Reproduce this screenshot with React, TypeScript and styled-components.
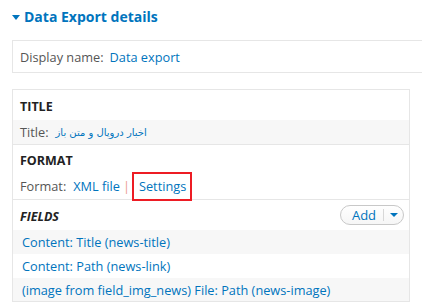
import React from "react";
import styled, { createGlobalStyle } from "styled-components";

const Global = createGlobalStyle`
  html, body { margin: 0; padding: 0; background: #fff; overflow: hidden; }
  body { font-family: "Open Sans", "DejaVu Sans", sans-serif; color: #333; }
`;

const Page = styled.div`
  width: 422px;
  height: 306px;
  padding: 0 0 0 12px;
  box-sizing: border-box;
  overflow: hidden;
`;

const Heading = styled.h2`
  margin: 0;
  padding-top: 6px;
  height: 40px;
  box-sizing: border-box;
  display: flex;
  align-items: flex-start;
  gap: 4px;
  font-size: 14px;
  font-weight: 700;
  color: #0074bd;
  line-height: 22px;
`;

const Caret = styled.span`
  display: inline-block;
  width: 0;
  height: 0;
  margin-top: 9px;
  border-left: 4px solid transparent;
  border-right: 4px solid transparent;
  border-top: 5px solid #0074bd;
`;

const NameBox = styled.div`
  margin-right: -20px;
  height: 33px;
  box-sizing: border-box;
  border: 1px solid #e6e6e6;
  display: flex;
  align-items: center;
  gap: 6px;
  padding: 0 7px;
  font-size: 12.75px;
`;

const Panel = styled.div`
  margin-top: 16px;
  width: 398px;
  box-sizing: border-box;
  border: 1px solid #e6e6e6;
  border-bottom: none;
`;

const SectionHead = styled.div<{ $italic?: boolean; $h: number }>`
  height: ${(p) => p.$h}px;
  box-sizing: border-box;
  display: flex;
  align-items: center;
  justify-content: space-between;
  padding: 2px 5px 0 7px;
  font-size: 12.5px;
  font-weight: 700;
  text-transform: uppercase;
  font-style: ${(p) => (p.$italic ? "italic" : "normal")};
  color: #222;
`;

const Row = styled.div<{ $alt?: boolean; $border?: boolean; $h?: number; $indent?: number }>`
  height: ${(p) => p.$h ?? 24}px;
  box-sizing: border-box;
  display: flex;
  align-items: center;
  gap: 7px;
  padding: 0 7px 0 ${(p) => p.$indent ?? 7}px;
  font-size: 12.75px;
  background: ${(p) => (p.$alt ? "#f7f7f7" : "#fff")};
  border-bottom: ${(p) => (p.$border ? "1px solid #e6e6e6" : "none")};
`;

const Label = styled.span`
  color: #555;
`;

const Link = styled.a`
  color: #0074bd;
  text-decoration: none;
`;

const Arabic = styled.a`
  color: #0074bd;
  text-decoration: none;
  font-family: "DejaVu Sans", sans-serif;
  font-size: 10px;
`;

const Sep = styled.span`
  color: #ec9a92;
  margin-left: -4px;
`;

const Highlight = styled.span`
  border: 2px solid #ed1c24;
  padding: 3px 4px 4px 5px;
  margin-left: -5px;
`;

const AddButton = styled.div`
  display: flex;
  align-items: center;
  height: 20px;
  width: 64px;
  margin-top: -3px;
  box-sizing: border-box;
  border: 1px solid #c8c8c8;
  border-radius: 10px;
  background: linear-gradient(#fff, #f6f6f6);
  font-size: 13px;
  font-weight: 400;
  font-style: normal;
  text-transform: none;
  color: #0074bd;
`;

const AddLabel = styled.span`
  flex: 1;
  text-align: center;
  padding-left: 4px;
`;

const AddToggle = styled.span`
  width: 19px;
  height: 12px;
  border-left: 1px solid #d8d8d8;
  display: flex;
  align-items: center;
  justify-content: center;
  &::after {
    content: "";
    border-left: 4px solid transparent;
    border-right: 4px solid transparent;
    border-top: 4px solid #0074bd;
  }
`;

export default function App() {
  return (
    <Page>
      <Global />
      <Heading>
        <Caret />
        Data Export details
      </Heading>
      <NameBox>
        <Label>Display name:</Label>
        <Link>Data export</Link>
      </NameBox>
      <Panel>
        <SectionHead $h={30}>Title</SectionHead>
        <Row $alt $border $h={25}>
          <Label>Title:</Label>
          <Arabic>اخبار دروپال و متن باز</Arabic>
        </Row>
        <SectionHead $h={28}>Format</SectionHead>
        <Row $border $h={27}>
          <Label>Format:</Label>
          <Link>XML file</Link>
          <Sep>|</Sep>
          <Highlight>
            <Link>Settings</Link>
          </Highlight>
        </Row>
        <SectionHead $h={30} $italic>
          Fields
          <AddButton>
            <AddLabel>Add</AddLabel>
            <AddToggle />
          </AddButton>
        </SectionHead>
        <Row $alt $indent={9}>
          <Link>Content: Title (news-title)</Link>
        </Row>
        <Row $indent={9}>
          <Link>Content: Path (news-link)</Link>
        </Row>
        <Row $alt $border $indent={9}>
          <Link>(image from field_img_news) File: Path (news-image)</Link>
        </Row>
      </Panel>
    </Page>
  );
}
